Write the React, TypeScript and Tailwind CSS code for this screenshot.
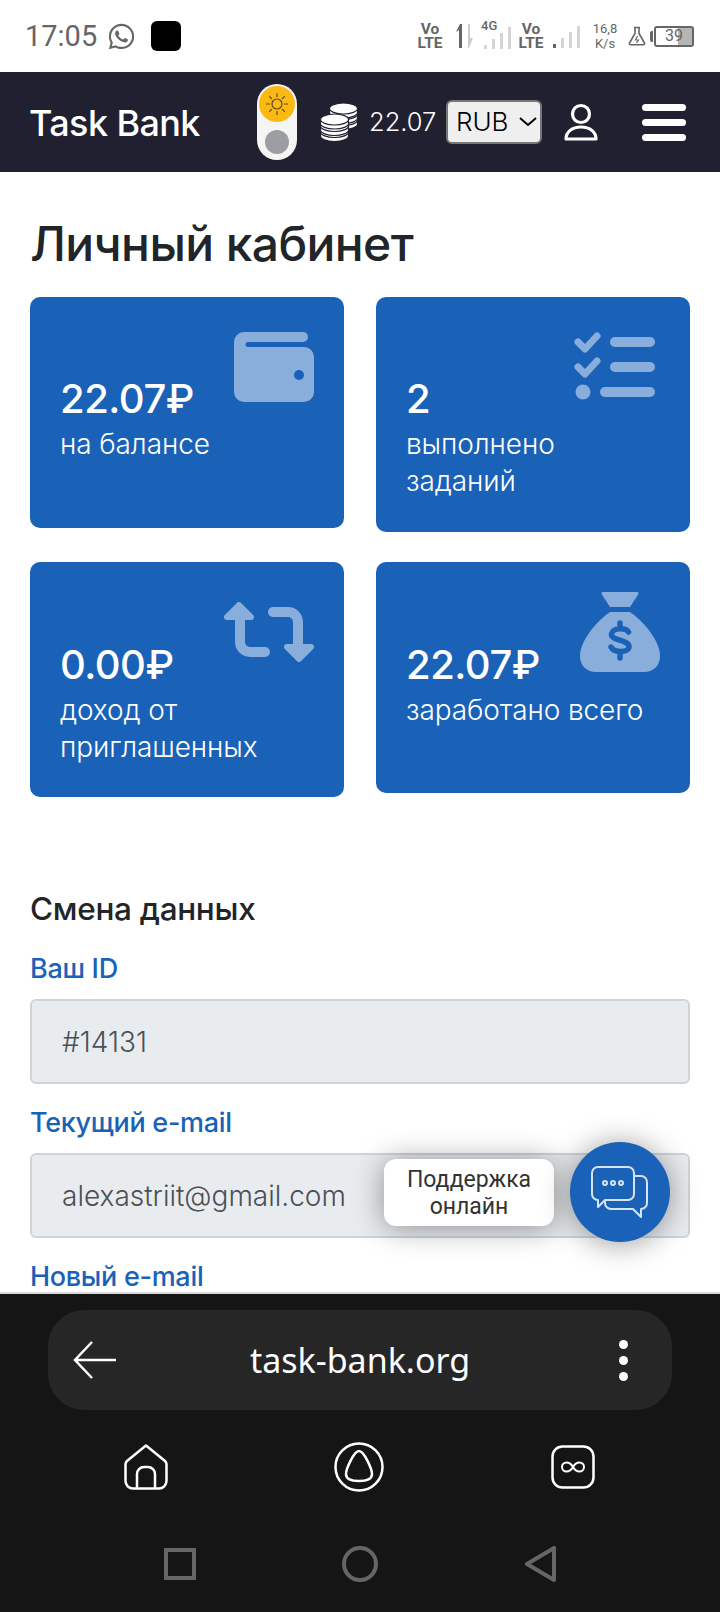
import { FaWhatsapp } from 'react-icons/fa';

const iconColor = '#8aaedc';

function VoLte() {
  return (
    <div className="flex flex-col items-center font-['Roboto',sans-serif] font-bold text-[#666] text-[15.5px] leading-[14px] w-[26px]">
      <span>Vo</span>
      <span>LTE</span>
    </div>
  );
}

function Signal({ active }: { active: number }) {
  const heights = [4, 10, 16, 22];
  return (
    <div className="flex items-end gap-[5px] h-[23px]">
      {heights.map((h, i) => (
        <div
          key={h}
          className={i < active ? 'w-[3px] bg-[#666]' : 'w-[3px] bg-[#d4d4d4]'}
          style={{ height: h }}
        />
      ))}
    </div>
  );
}

function StatusBar() {
  return (
    <div className="h-[72px] shrink-0 flex items-center justify-between pl-[25px] pr-[26px] bg-white">
      <div className="flex items-center">
        <span className="w-[70px] font-['Roboto',sans-serif] font-normal text-[29px] text-[#666] leading-none">17:05</span>
        <FaWhatsapp className="w-[29px] h-[29px] text-[#666] ml-[12px]" />
        <div className="w-[30px] h-[30px] rounded-[6px] bg-black ml-[15px]" />
      </div>
      <div className="flex items-center">
        <VoLte />
        <svg width="20" height="26" viewBox="0 0 20 26" className="ml-[12px]">
          <path d="M4 25V7L1 9 5 1h2v24z" fill="#666" />
          <path d="M13 1h2v14h3l-4 10h-1z" fill="#ccc" />
        </svg>
        <div className="relative ml-[6px] w-[30px] h-[26px] flex items-end justify-end">
          <span className="absolute left-[0px] top-[-4px] font-['Roboto',sans-serif] font-medium text-[13px] text-[#666] leading-none">4G</span>
          <Signal active={0} />
        </div>
        <div className="ml-[7px]"><VoLte /></div>
        <div className="ml-[9px]"><Signal active={1} /></div>
        <div className="flex flex-col items-center w-[30px] ml-[10px] font-['Roboto',sans-serif] text-[13px] leading-[15px] text-[#666]">
          <span>16,8</span>
          <span>K/s</span>
        </div>
        <svg width="18" height="20" viewBox="0 0 18 20" fill="none" stroke="#666" strokeWidth="1.6" className="ml-[8px]">
          <path d="M6 1.500h6M7 1.500v6L1.500 17a1.200 1.200 0 0 0 1 1.800h13a1.200 1.200 0 0 0 1-1.800L11 7.500v-6" />
          <path d="M9.500 10 7.500 14h3L8.500 17" strokeWidth="1.200" />
        </svg>
        <div className="w-[3px] h-[11px] bg-[#666] ml-[4px] rounded-l-[2px]" />
        <div className="relative w-[40px] h-[21px] ml-[1px] rounded-[3px] border-2 border-[#666] flex items-center justify-center overflow-hidden">
          <div className="absolute right-0 top-0 bottom-0 w-[14px] bg-[#b5b5b5]" />
          <span className="relative font-['Roboto',sans-serif] text-[16px] leading-none text-[#666]">39</span>
        </div>
      </div>
    </div>
  );
}

function Coins() {
  const disc = (cx: number, cy: number, key: string) => (
    <g key={key}>
      <path d={`M${cx - 14} ${cy}v4c0 3 6 5.500 14 5.500s14-2.500 14-5.500v-4z`} fill="#fff" stroke="#212031" strokeWidth="1.200" />
      <ellipse cx={cx} cy={cy} rx="14" ry="5.500" fill="#fff" stroke="#212031" strokeWidth="1.200" />
    </g>
  );
  return (
    <svg width="38" height="38" viewBox="0 0 38 38">
      {disc(23.5, 17, 'r3')}
      {disc(23.5, 11, 'r2')}
      {disc(23.5, 5.5, 'r1')}
      {disc(14.5, 29, 'l3')}
      {disc(14.5, 23, 'l2')}
      {disc(14.5, 16.5, 'l1')}
    </svg>
  );
}

function Header() {
  return (
    <div className="h-[100px] shrink-0 bg-[#212031] flex items-center pl-[29px] text-white">
      <span className="w-[228px] font-['Inter',sans-serif] font-medium text-[36px] leading-[46px] mt-[2px] tracking-[-0.6px]">Task Bank</span>
      <div className="w-[40px] h-[76px] rounded-full bg-[#f5f5f5] flex flex-col items-center pt-[2px]">
        <div className="w-[36px] h-[36px] rounded-full bg-[#fbb914] flex items-center justify-center">
          <svg width="24" height="24" viewBox="0 0 24 24" fill="none" stroke="#5a4a1c" strokeWidth="1.200" strokeLinecap="round">
            <circle cx="12" cy="12" r="5" />
            <path d="M12 1.500v3M12 19.500v3M1.500 12h3M19.500 12h3M4.600 4.600l2 2M17.400 17.400l2 2M4.600 19.400l2-2M17.400 6.600l2-2" />
          </svg>
        </div>
        <div className="w-[24px] h-[24px] rounded-full bg-[#9d9ea3] mt-[8px]" />
      </div>
      <div className="ml-[23px]"><Coins /></div>
      <span className="ml-[11px] w-[66px] font-['Inter',sans-serif] font-light text-[25.5px] leading-none">22.07</span>
      <div className="ml-[11px] w-[96px] h-[44px] bg-[#efefef] border-2 border-[#767676] rounded-[6px] flex items-center pl-[8px] text-black">
        <span className="font-['Inter',sans-serif] font-light text-[26px] leading-none">RUB</span>
        <svg width="18" height="10" viewBox="0 0 18 10" fill="none" stroke="#000" strokeWidth="2" className="ml-[10px]">
          <path d="M1 1l8 7 8-7" />
        </svg>
      </div>
      <svg width="34" height="38" viewBox="0 0 34 38" fill="none" stroke="#fff" strokeWidth="3.200" className="ml-[22px]">
        <circle cx="17" cy="11" r="8.500" />
        <path d="M2 36c0-7 6-12 15-12s15 5 15 12z" strokeLinejoin="round" />
      </svg>
      <div className="ml-[44px] flex flex-col gap-[8px]">
        <div className="w-[44px] h-[7px] rounded-full bg-white" />
        <div className="w-[44px] h-[7px] rounded-full bg-white" />
        <div className="w-[44px] h-[7px] rounded-full bg-white" />
      </div>
    </div>
  );
}

function WalletIcon() {
  return (
    <svg width="80" height="70" viewBox="0 0 80 70">
      <path d="M10 0H69a5 5 0 0 1 0 10H14a2.500 2.500 0 0 0 0 5H70a10 10 0 0 1 10 10V60a10 10 0 0 1-10 10H10A10 10 0 0 1 0 60V10A10 10 0 0 1 10 0Z" fill={iconColor} />
      <circle cx="65" cy="43" r="5" fill="#1a62b7" />
    </svg>
  );
}

function ChecklistIcon() {
  return (
    <svg width="81" height="68" viewBox="0 0 81 68" fill="none" stroke={iconColor} strokeLinecap="round" strokeLinejoin="round">
      <path d="M4 10l7 7L23 4" strokeWidth="7" />
      <path d="M4 35l7 7L23 29" strokeWidth="7" />
      <path d="M41 10h35M41 35h35M31 60h45" strokeWidth="10" />
      <circle cx="9" cy="60" r="7.500" fill={iconColor} stroke="none" />
    </svg>
  );
}

function ArrowsIcon() {
  return (
    <svg width="90" height="60" viewBox="0 0 90 60" fill="none">
      <path d="M16 15V40a10 10 0 0 0 10 10H41" stroke={iconColor} strokeWidth="10" strokeLinecap="round" />
      <path d="M15 3L3 15H27Z" fill={iconColor} stroke={iconColor} strokeWidth="6" strokeLinejoin="round" />
      <path d="M74 45V20a10 10 0 0 0-10-10H49" stroke={iconColor} strokeWidth="10" strokeLinecap="round" />
      <path d="M75 57L87 45H63Z" fill={iconColor} stroke={iconColor} strokeWidth="6" strokeLinejoin="round" />
    </svg>
  );
}

function BagIcon() {
  return (
    <svg width="80" height="80" viewBox="0 0 80 80" fill="none">
      <path d="M23 0H57a1.500 1.500 0 0 1 1.300 2.300L50 15H30L21.700 2.300A1.500 1.500 0 0 1 23 0Z" fill={iconColor} />
      <path d="M30 20H50C62 28 80 48 80 64C80 74 73 80 64 80H16C7 80 0 74 0 64C0 48 18 28 30 20Z" fill={iconColor} />
      <path d="M48.500 40C46 36 33 35 31.500 42C30.500 49 49.500 47 49 55C48 61 34 61 31 55M40 31V36M40 60V66" stroke="#1a62b7" strokeWidth="5.500" strokeLinecap="round" />
    </svg>
  );
}

function StatCard({ value, label, icon, className }: { value: string; label: string[]; icon: React.ReactNode; className: string }) {
  return (
    <div className={`relative bg-[#1a62b7] rounded-[10px] pl-[30px] pb-[34px] text-white font-['Inter',sans-serif] ${className}`}>
      {icon}
      <div className="text-[40px] leading-[48px] font-medium tracking-[-0.5px]">{value}</div>
      <div className="text-[28px] leading-[37px] font-light mt-[3px] tracking-[-0.1px]">
        {label.map((line) => (
          <div key={line}>{line}</div>
        ))}
      </div>
    </div>
  );
}

function Field({ label, value }: { label: string; value: string }) {
  return (
    <div>
      <div className="text-[27px] leading-[36px] font-medium text-[#1a62b7] tracking-[-0.3px]">{label}</div>
      <div className="mt-[12px] mb-[21px] h-[85px] rounded-[6px] border-2 border-[#ced4da] bg-[#e9ecef] flex items-center pl-[30px] text-[28px] font-light text-[#495057]">
        {value}
      </div>
    </div>
  );
}

function Content() {
  return (
    <div className="relative flex-1 overflow-hidden bg-white px-[30px] font-['Inter',sans-serif]">
      <h1 className="mt-[43px] text-[48px] leading-[58px] font-medium text-[#212529] tracking-[-0.6px]">Личный кабинет</h1>
      <div className="mt-[24px] grid grid-cols-2 gap-x-[32px] gap-y-[30px] items-start">
        <StatCard
          value="22.07₽"
          label={['на балансе']}
          className="h-[231px] pt-[78px]"
          icon={<div className="absolute top-[35px] right-[30px]"><WalletIcon /></div>}
        />
        <StatCard
          value="2"
          label={['выполнено', 'заданий']}
          className="h-[235px] pt-[78px]"
          icon={<div className="absolute top-[35px] right-[35px]"><ChecklistIcon /></div>}
        />
        <StatCard
          value="0.00₽"
          label={['доход от', 'приглашенных']}
          className="h-[235px] pt-[79px]"
          icon={<div className="absolute top-[40px] right-[30px]"><ArrowsIcon /></div>}
        />
        <StatCard
          value="22.07₽"
          label={['заработано всего']}
          className="h-[231px] pt-[79px]"
          icon={<div className="absolute top-[30px] right-[30px]"><BagIcon /></div>}
        />
      </div>
      <h2 className="mt-[93px] text-[31.5px] leading-[38px] font-medium text-[#212529] tracking-[-0.3px]">Смена данных</h2>
      <div className="mt-[23px]">
        <Field label="Ваш ID" value="#14131" />
        <Field label="Текущий e-mail" value="alexastriit@gmail.com" />
        <Field label="Новый e-mail" value="" />
      </div>
      <div className="absolute left-[384px] top-[987px] w-[170px] h-[67px] rounded-[12px] bg-white shadow-[0_2px_30px_rgba(0,0,0,0.4)] flex items-center justify-center text-center font-['Roboto',sans-serif] text-[23px] leading-[27px] text-[#333]">
        Поддержка онлайн
      </div>
      <div className="absolute left-[570px] top-[970px] w-[100px] h-[100px] rounded-full bg-[#1a62b7] shadow-[0_2px_30px_rgba(0,0,0,0.4)] flex items-center justify-center">
        <svg width="58" height="52" viewBox="0 0 58 52" fill="none" stroke="#d5e3f5" strokeWidth="2" strokeLinejoin="round">
          <path d="M7 1H37a6 6 0 0 1 6 6V28a6 6 0 0 1-6 6H14L7 41V34A6 6 0 0 1 1 28V7A6 6 0 0 1 7 1Z" />
          <path d="M44 10H50a6 6 0 0 1 6 6V37a6 6 0 0 1-6 6V51L42 43H20a6 6 0 0 1-6-6V35" />
          <circle cx="14" cy="17" r="2" />
          <circle cx="22" cy="17" r="2" />
          <circle cx="30" cy="17" r="2" />
        </svg>
      </div>
    </div>
  );
}

function BrowserBar() {
  return (
    <div className="h-[320px] shrink-0 bg-[#151515] border-t-2 border-[#d8d8d8] flex flex-col items-center">
      <div className="mt-[16px] w-[624px] h-[100px] rounded-[36px] bg-[#262626] flex items-center pl-[25px] pr-[44px]">
        <svg width="44" height="38" viewBox="0 0 44 38" fill="none" stroke="#fff" strokeWidth="2.500">
          <path d="M19 1L2 19l17 18M2 19h41" />
        </svg>
        <span className="flex-1 mr-[16px] text-center font-['Noto_Sans',sans-serif] text-[34px] leading-none text-white">task-bank.org</span>
        <div className="flex flex-col gap-[7px]">
          <div className="w-[9px] h-[9px] rounded-full bg-white" />
          <div className="w-[9px] h-[9px] rounded-full bg-white" />
          <div className="w-[9px] h-[9px] rounded-full bg-white" />
        </div>
      </div>
      <div className="mt-[32px] w-full flex items-center pl-[124px]">
        <svg width="44" height="46" viewBox="0 0 44 46" fill="none" stroke="#fff" strokeWidth="2.500">
          <path d="M22 1.500L3 17a5 5 0 0 0-1.500 4V37a7.500 7.500 0 0 0 7.500 7.500H35a7.500 7.500 0 0 0 7.500-7.500V21A5 5 0 0 0 41 17L22 1.500Z" strokeLinejoin="round" />
          <path d="M13 44V30a7 7 0 0 1 7-7h4a7 7 0 0 1 7 7V44" />
        </svg>
        <svg width="50" height="50" viewBox="0 0 50 50" fill="none" stroke="#fff" strokeWidth="2.500" className="ml-[166px]">
          <circle cx="25" cy="25" r="23.500" />
          <path d="M25 9C20 9 12 27 12 32C12 38 20 39 25 39S38 38 38 32C38 27 30 9 25 9Z" />
        </svg>
        <svg width="44" height="44" viewBox="0 0 44 44" fill="none" stroke="#fff" strokeWidth="2.500" className="ml-[167px]">
          <rect x="1.500" y="1.500" width="41" height="41" rx="10" />
          <path d="M22 22C20 18.500 18 17.500 15.500 17.500A4.500 4.500 0 0 0 15.500 26.500C18 26.500 20 25.500 22 22C24 18.500 26 17.500 28.500 17.500A4.500 4.500 0 0 1 28.500 26.500C26 26.500 24 25.500 22 22Z" strokeWidth="2" />
        </svg>
      </div>
      <div className="mt-[54px] w-full flex items-center pl-[164px]">
        <div className="w-[32px] h-[32px] border-[4px] border-[#666]" />
        <div className="w-[36px] h-[36px] rounded-full border-[4px] border-[#666] ml-[146px]" />
        <svg width="32" height="36" viewBox="0 0 32 36" fill="none" stroke="#666" strokeWidth="4" strokeLinejoin="round" className="ml-[147px]">
          <path d="M29 2V34L2 18Z" />
        </svg>
      </div>
    </div>
  );
}

export default function App() {
  return (
    <div className="w-[720px] h-[1612px] flex flex-col overflow-hidden bg-white">
      <StatusBar />
      <Header />
      <Content />
      <BrowserBar />
    </div>
  );
}
